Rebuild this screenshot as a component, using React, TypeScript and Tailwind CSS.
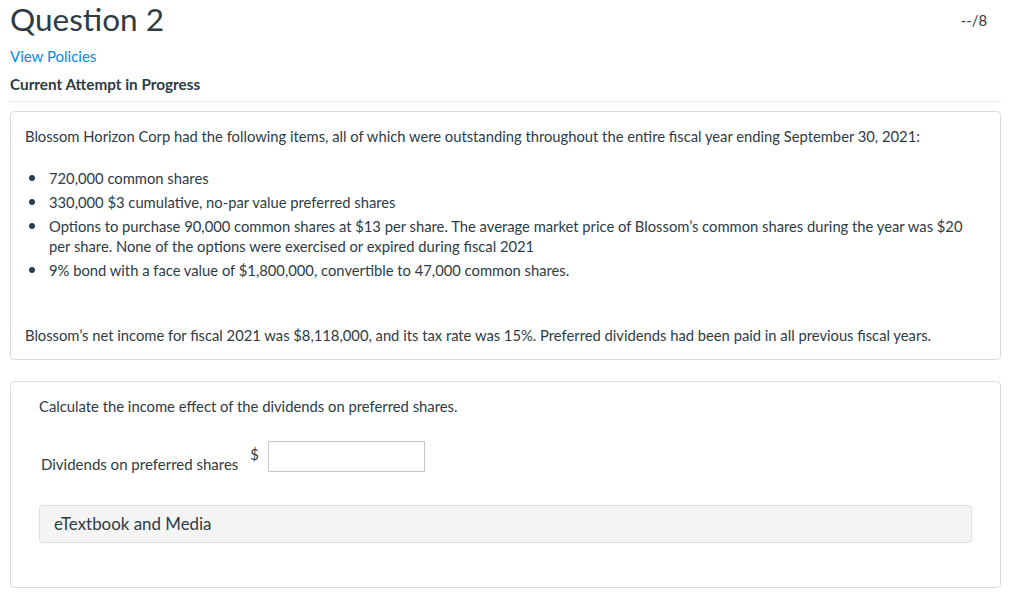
import React from "react";

const items = [
  "720,000 common shares",
  "330,000 $3 cumulative, no-par value preferred shares",
  "Options to purchase 90,000 common shares at $13 per share. The average market price of Blossom’s common shares during the year was $20 per share. None of the options were exercised or expired during fiscal 2021",
  "9% bond with a face value of $1,800,000, convertible to 47,000 common shares.",
];

export default function App() {
  return (
    <div className="min-h-[596px] bg-white text-[#2d3b45]" style={{ fontFamily: "Lato, 'Liberation Sans', sans-serif" }}>
      <div className="pl-[10px] pr-[23px]">
        <div className="flex items-start justify-between">
          <h1 className="text-[31.5px] leading-[38px] font-normal m-0">Question 2</h1>
          <div className="text-[14.75px] leading-[20px] pt-[10px] pr-[14px]">--/8</div>
        </div>
        <div className="mt-[8px] text-[15px] leading-[20px] text-[#008ee2]">View Policies</div>
        <div className="mt-[8px] text-[15.3px] leading-[20px] font-bold">Current Attempt in Progress</div>
      </div>
      <div className="ml-[10px] w-[991px]">
        <div className="mt-[7px] h-px bg-[#ececec]" />
        <div className="mt-[9px] rounded-[4px] border border-[#dcdcdc] px-[14px] pt-[14px] pb-[14px] text-[14.75px] leading-[20px]">
          <p>Blossom Horizon Corp had the following items, all of which were outstanding throughout the entire fiscal year ending September 30, 2021:</p>
          <ul className="mt-[22px] flex flex-col gap-[4px]">
            {items.map((t) => (
              <li key={t} className="flex">
                <span className="w-[24px] shrink-0 h-[20px] flex items-center pl-[4px]">
                  <span className="block w-[6px] h-[6px] rounded-full bg-[#2d3b45]" />
                </span>
                <span>{t}</span>
              </li>
            ))}
          </ul>
          <p className="mt-[45px]">Blossom’s net income for fiscal 2021 was $8,118,000, and its tax rate was 15%. Preferred dividends had been paid in all previous fiscal years.</p>
        </div>
        <div className="mt-[21px] h-[207px] rounded-[4px] border border-[#dcdcdc] pl-[28px] pr-[28px] pt-[14px] text-[14.8px] leading-[20px]">
          <p>Calculate the income effect of the dividends on preferred shares.</p>
          <div className="mt-[25px] flex items-start">
            <span className="ml-[2px] mt-[13px] text-[15px]">Dividends on preferred shares</span>
            <span className="ml-[12px] mt-[3px]">$</span>
            <div className="ml-[9px] h-[31px] w-[157px] border border-[#c8c8c8] bg-white" />
          </div>
          <div className="mt-[31px] h-[38px] rounded-[3px] border border-[#dedede] bg-[#f4f4f4] pl-[14px] flex items-center text-[16.9px]">
            eTextbook and Media
          </div>
        </div>
      </div>
    </div>
  );
}
